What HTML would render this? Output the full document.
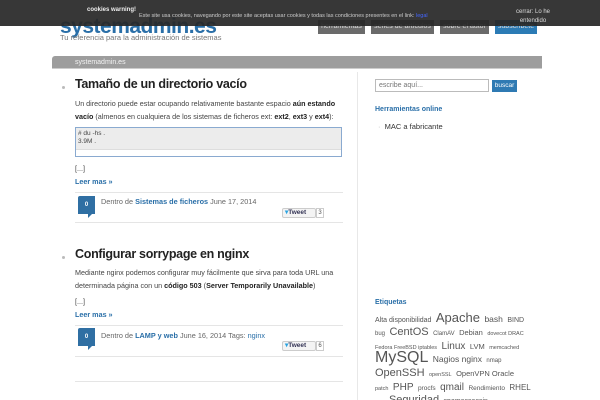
<!DOCTYPE html>
<html><head><meta charset="utf-8"><style>
*{margin:0;padding:0;box-sizing:border-box}
html,body{width:600px;height:400px;overflow:hidden}
body{background:#fff;font-family:"Liberation Sans",sans-serif;position:relative;color:#333}
.abs{position:absolute}
.logo{left:60px;top:15px;font-size:21px;font-weight:bold;color:#2a6fa8;letter-spacing:-0.5px}
.tag{left:60px;top:33px;font-size:7.5px;color:#777}
.btn{top:20px;height:14px;background:#6a6a6a;color:#ddd;font-size:7px;text-align:center;line-height:14px}
.cookie{left:0;top:0;width:600px;height:26px;background:rgba(40,40,40,0.93)}
.strip{left:52px;top:56px;width:490px;height:13px;background:#9d9d9d;border-radius:3px 0 0 0;border-bottom:1px solid #ccc;color:#f2f2f2;font-size:7px;line-height:13px;padding-left:23px}
.vl{left:357px;top:72px;width:1px;height:328px;background:#e8e8e8}
.title{font-size:12.5px;font-weight:bold;color:#222;left:75px;letter-spacing:-0.3px}
.dot{left:62px;width:3px;height:3px;border-radius:50%;background:#bbb}
.p{left:75px;font-size:7.2px;line-height:13px;color:#444;width:285px}
.p b{color:#222}
.lm{left:75px;font-size:7.2px;font-weight:bold;color:#2a6fa8}
.hr{left:75px;width:268px;height:1px;background:#e5e5e5}
.badge{left:78px;width:17px;height:18px;background:#2f6fa3;color:#fff;font-size:6px;font-weight:bold;text-align:center;line-height:18px;border-radius:2px 0 0 0}
.badge:after{content:"";position:absolute;left:10px;bottom:-4px;border-left:4px solid #2f6fa3;border-bottom:4px solid transparent}
.meta{left:101px;font-size:7.3px;color:#666;white-space:nowrap}
.meta b{color:#2a6fa8}
.tw{left:282px;height:10px;width:34px;border:1px solid #ccc;border-radius:2px;background:#f4f4f4;font-size:6.5px;font-weight:bold;color:#335;line-height:8px;padding-left:2px}
.tw span{color:#2aa3e0}
.tc{height:10px;width:8px;border:1px solid #ccc;font-size:6px;color:#555;line-height:8px;text-align:center}
.side{font-size:7.5px;color:#333}
.tl{position:absolute;left:375px;white-space:nowrap;color:#555;line-height:14px;height:14px}
</style></head><body>
<div class="abs logo">systemadmin.es</div>
<div class="abs tag">Tu referencia para la administración de sistemas</div>
<div class="abs btn" style="left:318px;width:47px">herramientas</div>
<div class="abs btn" style="left:371px;width:63px">series de artículos</div>
<div class="abs btn" style="left:440px;width:49px">sobre el autor</div>
<div class="abs btn" style="left:495px;width:42px;background:#2b7bb5">subscríbete</div>
<div class="abs cookie"></div>
<div class="abs" style="left:87px;top:7px;font-size:6px;font-weight:bold;color:#eee">cookies warning!</div>
<div class="abs" style="left:139px;top:13px;font-size:5.5px;color:#ccc;white-space:nowrap">Este site usa cookies, navegando por este site aceptas usar cookies y todas las condiciones presentes en el link: <span style="color:#46f">legal</span></div>
<div class="abs" style="left:510px;top:8px;font-size:6px;color:#ddd;text-align:center;width:46px;line-height:9px">cerrar: Lo he entendido</div>
<div class="abs strip">systemadmin.es</div>
<div class="abs vl"></div>

<div class="abs dot" style="top:86px"></div>
<div class="abs title" style="top:77px">Tamaño de un directorio vacío</div>
<div class="abs p" style="top:97px">Un directorio puede estar ocupando relativamente bastante espacio <b>aún estando</b><br><b>vacío</b> (almenos en cualquiera de los sistemas de ficheros ext: <b>ext2</b>, <b>ext3</b> y <b>ext4</b>):</div>
<div class="abs" style="left:75px;top:127px;width:267px;height:30px;border:1px solid #8aaad0;background:#ececec;font-size:6.5px;color:#444;padding:2px;line-height:8px">#&nbsp;du -hs .<br>3.9M .</div>
<div class="abs" style="left:76px;top:149px;width:265px;height:7px;background:#fff;border-top:1px solid #ddd"></div>
<div class="abs p" style="top:162px">[...]</div>
<div class="abs lm" style="top:177px">Leer mas »</div>
<div class="abs hr" style="top:192px"></div>
<div class="abs badge" style="top:196px">0</div>
<div class="abs meta" style="top:197px">Dentro de <b>Sistemas de ficheros</b> June 17, 2014</div>
<div class="abs tw" style="top:208px"><span>▾</span>Tweet</div>
<div class="abs tc" style="left:316px;top:208px">3</div>
<div class="abs hr" style="top:222px"></div>

<div class="abs dot" style="top:256px"></div>
<div class="abs title" style="top:247px">Configurar sorrypage en nginx</div>
<div class="abs p" style="top:266px">Mediante nginx podemos configurar muy fácilmente que sirva para toda URL una<br>determinada página con un <b>código 503</b> (<b>Server Temporarily Unavailable</b>)</div>
<div class="abs p" style="top:295px">[...]</div>
<div class="abs lm" style="top:310px">Leer mas »</div>
<div class="abs hr" style="top:325px"></div>
<div class="abs badge" style="top:328px">0</div>
<div class="abs meta" style="top:331px">Dentro de <b>LAMP y web</b> June 16, 2014 Tags: <b style="font-weight:normal">nginx</b></div>
<div class="abs tw" style="top:341px"><span>▾</span>Tweet</div>
<div class="abs tc" style="left:316px;top:341px">6</div>
<div class="abs hr" style="top:356px"></div>
<div class="abs hr" style="top:381px"></div>

<div class="abs" style="left:375px;top:79px;width:114px;height:13px;border:1px solid #bbb;font-size:7px;color:#777;padding:2px 3px">escribe aquí...</div>
<div class="abs" style="left:492px;top:80px;width:25px;height:12px;background:#2f7ab3;color:#fff;font-size:6.5px;text-align:center;line-height:12px">buscar</div>
<div class="abs" style="left:375px;top:106px;font-size:7px;font-weight:bold;color:#2a6fa8">Herramientas online</div>
<div class="abs side" style="left:378px;top:122px"><span style="color:#bbb">·</span>&nbsp; MAC a fabricante</div>
<div class="abs" style="left:375px;top:299px;font-size:7px;font-weight:bold;color:#2a6fa8">Etiquetas</div>
<div class="tl" style="top:311px"><span style="font-size:7px">Alta disponibilidad</span> <span style="font-size:13px">Apache</span> <span style="font-size:8.5px">bash</span> <span style="font-size:7px">BIND</span></div>
<div class="tl" style="top:324px"><span style="font-size:6px">bug</span> <span style="font-size:11px">CentOS</span> <span style="font-size:6px">ClamAV</span> <span style="font-size:7.5px">Debian</span> <span style="font-size:5.5px">dovecot DRAC</span></div>
<div class="tl" style="top:338px"><span style="font-size:5.5px">Fedora FreeBSD iptables</span> <span style="font-size:10px">Linux</span> <span style="font-size:7.5px">LVM</span> <span style="font-size:5.5px">memcached</span></div>
<div class="tl" style="top:350px;line-height:16px;height:16px"><span style="font-size:16px">MySQL</span> <span style="font-size:8.5px">Nagios nginx</span> <span style="font-size:6px">nmap</span></div>
<div class="tl" style="top:365px"><span style="font-size:11px">OpenSSH</span> <span style="font-size:5.5px">openSSL</span> <span style="font-size:7.5px">OpenVPN Oracle</span></div>
<div class="tl" style="top:379px"><span style="font-size:5.5px">patch</span> <span style="font-size:10px">PHP</span> <span style="font-size:6.5px">procfs</span> <span style="font-size:10px">qmail</span> <span style="font-size:6.5px">Rendimiento</span> <span style="font-size:8px">RHEL</span></div>
<div class="tl" style="top:392px"><span style="font-size:5.5px">rpm</span> <span style="font-size:11px">Seguridad</span> <span style="font-size:7px">spamassassin</span></div>
</body></html>
